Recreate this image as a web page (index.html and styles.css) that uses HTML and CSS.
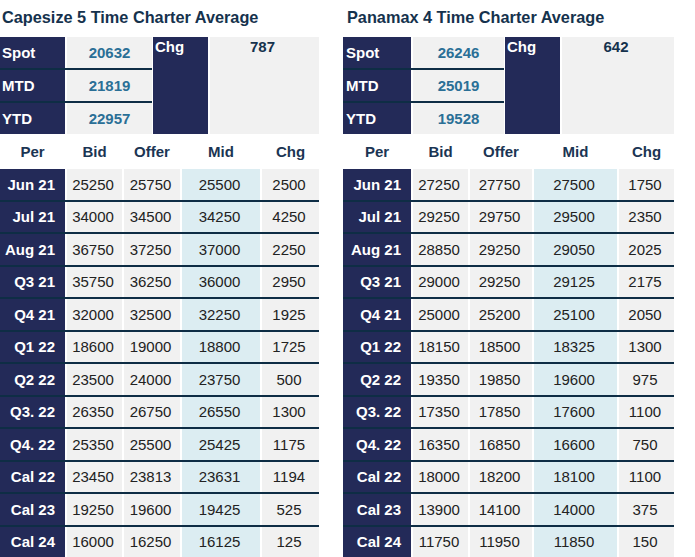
FILE: index.html
```html
<!DOCTYPE html>
<html>
<head>
<meta charset="utf-8">
<link rel="stylesheet" href="styles.css">
</head>
<body>
<div class="page">
  <section class="panel panel-cape">
    <h2 class="title">Capesize 5 Time Charter Average</h2>
    <div class="summary">
      <div class="stack">
        <div class="srow"><div class="slabel">Spot</div><div class="sval">20632</div></div>
        <div class="srow"><div class="slabel">MTD</div><div class="sval">21819</div></div>
        <div class="srow"><div class="slabel">YTD</div><div class="sval">22957</div></div>
      </div>
      <div class="chg-label">Chg</div>
      <div class="chg-val">787</div>
    </div>
    <div class="table">
      <div class="trow head"><div>Per</div><div>Bid</div><div>Offer</div><div>Mid</div><div>Chg</div></div>
      <div class="trow data"><div class="per">Jun 21</div><div>25250</div><div>25750</div><div class="mid">25500</div><div>2500</div></div>
      <div class="trow data"><div class="per">Jul 21</div><div>34000</div><div>34500</div><div class="mid">34250</div><div>4250</div></div>
      <div class="trow data"><div class="per">Aug 21</div><div>36750</div><div>37250</div><div class="mid">37000</div><div>2250</div></div>
      <div class="trow data"><div class="per">Q3 21</div><div>35750</div><div>36250</div><div class="mid">36000</div><div>2950</div></div>
      <div class="trow data"><div class="per">Q4 21</div><div>32000</div><div>32500</div><div class="mid">32250</div><div>1925</div></div>
      <div class="trow data"><div class="per">Q1 22</div><div>18600</div><div>19000</div><div class="mid">18800</div><div>1725</div></div>
      <div class="trow data"><div class="per">Q2 22</div><div>23500</div><div>24000</div><div class="mid">23750</div><div>500</div></div>
      <div class="trow data"><div class="per">Q3. 22</div><div>26350</div><div>26750</div><div class="mid">26550</div><div>1300</div></div>
      <div class="trow data"><div class="per">Q4. 22</div><div>25350</div><div>25500</div><div class="mid">25425</div><div>1175</div></div>
      <div class="trow data"><div class="per">Cal 22</div><div>23450</div><div>23813</div><div class="mid">23631</div><div>1194</div></div>
      <div class="trow data"><div class="per">Cal 23</div><div>19250</div><div>19600</div><div class="mid">19425</div><div>525</div></div>
      <div class="trow data"><div class="per">Cal 24</div><div>16000</div><div>16250</div><div class="mid">16125</div><div>125</div></div>
    </div>
  </section>
  <section class="panel panel-pana">
    <h2 class="title">Panamax 4 Time Charter Average</h2>
    <div class="summary">
      <div class="stack">
        <div class="srow"><div class="slabel">Spot</div><div class="sval">26246</div></div>
        <div class="srow"><div class="slabel">MTD</div><div class="sval">25019</div></div>
        <div class="srow"><div class="slabel">YTD</div><div class="sval">19528</div></div>
      </div>
      <div class="chg-label">Chg</div>
      <div class="chg-val">642</div>
    </div>
    <div class="table">
      <div class="trow head"><div>Per</div><div>Bid</div><div>Offer</div><div>Mid</div><div>Chg</div></div>
      <div class="trow data"><div class="per">Jun 21</div><div>27250</div><div>27750</div><div class="mid">27500</div><div>1750</div></div>
      <div class="trow data"><div class="per">Jul 21</div><div>29250</div><div>29750</div><div class="mid">29500</div><div>2350</div></div>
      <div class="trow data"><div class="per">Aug 21</div><div>28850</div><div>29250</div><div class="mid">29050</div><div>2025</div></div>
      <div class="trow data"><div class="per">Q3 21</div><div>29000</div><div>29250</div><div class="mid">29125</div><div>2175</div></div>
      <div class="trow data"><div class="per">Q4 21</div><div>25000</div><div>25200</div><div class="mid">25100</div><div>2050</div></div>
      <div class="trow data"><div class="per">Q1 22</div><div>18150</div><div>18500</div><div class="mid">18325</div><div>1300</div></div>
      <div class="trow data"><div class="per">Q2 22</div><div>19350</div><div>19850</div><div class="mid">19600</div><div>975</div></div>
      <div class="trow data"><div class="per">Q3. 22</div><div>17350</div><div>17850</div><div class="mid">17600</div><div>1100</div></div>
      <div class="trow data"><div class="per">Q4. 22</div><div>16350</div><div>16850</div><div class="mid">16600</div><div>750</div></div>
      <div class="trow data"><div class="per">Cal 22</div><div>18000</div><div>18200</div><div class="mid">18100</div><div>1100</div></div>
      <div class="trow data"><div class="per">Cal 23</div><div>13900</div><div>14100</div><div class="mid">14000</div><div>375</div></div>
      <div class="trow data"><div class="per">Cal 24</div><div>11750</div><div>11950</div><div class="mid">11850</div><div>150</div></div>
    </div>
  </section>
</div>
</body>
</html>
```

FILE: styles.css
```css
html, body {
  margin: 0;
  padding: 0;
  background: #ffffff;
}

body {
  font-family: "Liberation Sans", Arial, sans-serif;
  font-size: 15px;
  color: #222222;
  overflow: hidden;
}

.page {
  display: flex;
  gap: 24px;
  align-items: flex-start;
}

.panel-cape { width: 319px; }
.panel-pana { width: 331px; }

.title {
  margin: 0;
  height: 37px;
  box-sizing: border-box;
  line-height: 34px;
  padding-bottom: 3px;
  font-size: 16.3px;
  font-weight: bold;
  color: #15324d;
  white-space: nowrap;
}
.panel-cape .title { padding-left: 2px; }
.panel-pana .title { padding-left: 4px; }

/* summary block */
.summary {
  display: flex;
  height: 97px;
}

.stack {
  display: flex;
  flex-direction: column;
}
.panel-cape .stack { width: 152px; }
.panel-pana .stack { width: 161px; }

.srow {
  display: grid;
  column-gap: 2px;
  height: 31px;
  background: #ffffff;
}
.srow + .srow {
  border-top: 2px solid #0e2d45;
}
.panel-cape .srow { grid-template-columns: 65px 85px; }
.panel-pana .srow { grid-template-columns: 68px 91px; }

.slabel {
  background: #232a58;
  color: #ffffff;
  font-weight: bold;
  display: flex;
  align-items: center;
  padding-left: 2px;
}
.panel-pana .slabel { padding-left: 3px; }

.sval {
  background: #f1f1f1;
  color: #2a6f96;
  font-weight: bold;
  display: flex;
  align-items: center;
  justify-content: center;
}

.chg-label {
  margin-left: 1px;
  width: 55px;
  background: #232a58;
  color: #ffffff;
  font-weight: bold;
  line-height: 17px;
  padding-top: 1px;
  padding-left: 2px;
  box-sizing: border-box;
}

.chg-val {
  margin-left: 2px;
  flex: 1;
  background: #f1f1f1;
  color: #15324d;
  font-weight: bold;
  text-align: center;
  line-height: 17px;
  padding-top: 1px;
  padding-right: 4px;
}

/* detail table */
.trow {
  display: grid;
  column-gap: 2px;
}
.panel-cape .trow { grid-template-columns: 65px 55px 56px 78px 57px; }
.panel-pana .trow { grid-template-columns: 68px 55px 62px 83px 55px; }

.trow > div {
  display: flex;
  align-items: center;
  justify-content: center;
}

.head {
  height: 35px;
}
.head > div {
  font-weight: bold;
  color: #1b3553;
}

.data {
  height: 30.5px;
}
.data + .data {
  border-top: 2px solid #0e2d45;
}
.data > div {
  background: #f1f1f1;
  padding-right: 3px;
}
.data > .mid {
  background: #dcedf2;
}
.data > .per {
  background: #232a58;
  color: #ffffff;
  font-weight: bold;
  justify-content: flex-end;
  padding-right: 10px;
}
```
